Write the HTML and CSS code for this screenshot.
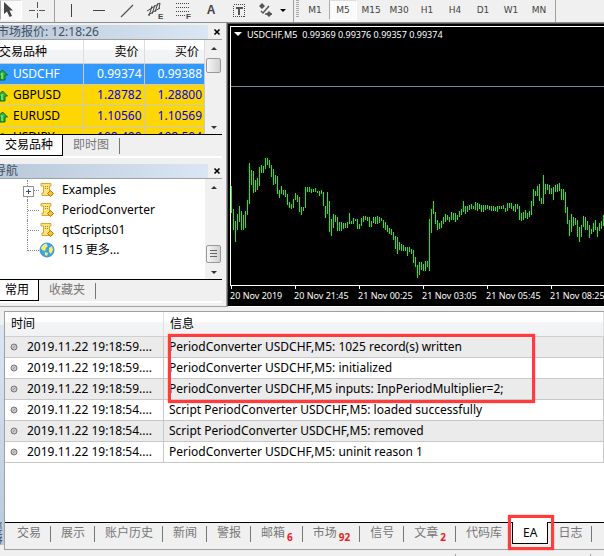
FILE: index.html
```html
<!DOCTYPE html>
<html lang="zh-CN">
<head>
    <meta charset="utf-8">
    <title>USDCHF,M5</title>
    <link rel="stylesheet" href="styles.css">
</head>
<body>

    <!-- Shared icons -->
    <svg class="defs" width="0" height="0">
        <defs>
            <symbol id="up" viewBox="0 0 12 12">
                <path d="M5.500 1 L10.500 6 H8 V11 H3 V6 H0.500 Z" fill="#2fb53a" stroke="#0b6b14"/>
                <path d="M5 4 V10" stroke="#b6f5a8"/>
            </symbol>
            <symbol id="script" viewBox="0 0 16 16">
                <path d="M2 1.500 H12 V4 H10.500 V11 H13 V13.500 H3 V11 H4.500 V4 H2 Z" fill="#ffe27a" stroke="#d3a73a"/>
                <path d="M6 4.500 H9 M6 6.500 H9" stroke="#a5822f" stroke-dasharray="1 1"/>
                <path d="M11.500 8.500 L14.500 11.500 L11.500 14.500 L8.500 11.500 Z" fill="#f2c230" stroke="#a97c0c"/>
            </symbol>
            <symbol id="dot" viewBox="0 0 8 8">
                <circle cx="4" cy="4" r="3" fill="#c8c8c8" stroke="#777"/>
                <path d="M2.500 5.500 L5.500 2.500" stroke="#999"/>
            </symbol>
            <symbol id="close" viewBox="0 0 8 8">
                <path d="M1.500 1.500 L6.500 6.500 M6.500 1.500 L1.500 6.500" stroke="#000" stroke-width="1.600"/>
            </symbol>
        </defs>
    </svg>

    <!-- Toolbar -->
    <div class="toolbar">
        <button class="tool tool-cursor pressed" aria-label="Cursor">
            <svg width="12" height="16"><path d="M1 0 V12 L4 9.500 L6.500 15 L9 14 L6.500 8.500 H10 Z" fill="#444"/></svg>
        </button>
        <button class="tool tool-cross" aria-label="Crosshair">
            <svg width="16" height="16" shape-rendering="crispEdges"><path d="M0 8.500 H6 M10 8.500 H16 M8.500 0 V6 M8.500 11 V16 M8 8.500 H9" stroke="#555"/></svg>
        </button>
        <span class="sep"></span>
        <button class="tool" aria-label="Vertical line">
            <svg width="16" height="16" shape-rendering="crispEdges"><path d="M8.500 2 V15" stroke="#444"/></svg>
        </button>
        <button class="tool" aria-label="Horizontal line">
            <svg width="16" height="16" shape-rendering="crispEdges"><path d="M2 8.500 H14" stroke="#444"/></svg>
        </button>
        <button class="tool" aria-label="Trendline">
            <svg width="16" height="16"><path d="M2 15 L14 3" stroke="#555" stroke-width="1.300"/></svg>
        </button>
        <button class="tool" aria-label="Channel">
            <svg width="18" height="18">
                <path d="M1 10 L14 2 M2 14 L14 7 M6 5 L3 15 M9 4 L6 13 M12 2 L9 11 M14 2 L13 8" fill="none" stroke="#444"/>
                <text x="12" y="18">E</text>
            </svg>
        </button>
        <button class="tool" aria-label="Fibonacci">
            <svg width="16" height="18">
                <path d="M1 2.500 H15 M1 6.500 H15 M1 10.500 H15 M1 14.500 H10" stroke="#444" stroke-dasharray="1 1" shape-rendering="crispEdges"/>
                <text x="11" y="18">F</text>
            </svg>
        </button>
        <button class="tool tool-text" aria-label="Text">A</button>
        <button class="tool" aria-label="Text label">
            <svg width="14" height="15" shape-rendering="crispEdges">
                <rect x="1.500" y="1.500" width="11" height="12" fill="none" stroke="#444" stroke-dasharray="1 1"/>
                <path d="M4 4 H11 V6 H8 V12 H6 V6 H4 Z" fill="#555"/>
            </svg>
        </button>
        <button class="tool tool-arrows" aria-label="Arrows">
            <svg width="28" height="16">
                <path d="M4 1 L7 4 L4 7 L1 4 Z M11 9 L14 12 L11 15 L8 12 Z" fill="#555"/>
                <path d="M3 9 L5 11 L11 4 M7 12 H14" fill="none" stroke="#555" stroke-width="1.500"/>
                <path d="M22 7 H28 L25 10 Z" fill="#000"/>
            </svg>
        </button>
        <span class="sep"></span>
        <span class="grip"></span>
        <button class="tool">M1</button>
        <button class="tool pressed">M5</button>
        <button class="tool">M15</button>
        <button class="tool">M30</button>
        <button class="tool">H1</button>
        <button class="tool">H4</button>
        <button class="tool">D1</button>
        <button class="tool">W1</button>
        <button class="tool">MN</button>
        <span class="sep"></span>
    </div>

    <div class="workspace">
        <div class="sidebar">

            <!-- Market watch -->
            <div class="panel">
                <div class="panel-title">
                    <span class="caption">市场报价: 12:18:26</span>
                    <button class="close" aria-label="关闭"><svg width="8" height="8"><use href="#close"/></svg></button>
                </div>
                <div class="panel-body market">
                    <div class="view">
                        <table class="quotes">
                            <thead>
                                <tr><th>交易品种</th><th>卖价</th><th>买价</th></tr>
                            </thead>
                            <tbody>
                                <tr class="selected"><td><svg width="12" height="12"><use href="#up"/></svg>USDCHF</td><td>0.99374</td><td>0.99388</td></tr>
                                <tr><td><svg width="12" height="12"><use href="#up"/></svg>GBPUSD</td><td>1.28782</td><td>1.28800</td></tr>
                                <tr><td><svg width="12" height="12"><use href="#up"/></svg>EURUSD</td><td>1.10560</td><td>1.10569</td></tr>
                                <tr><td><svg width="12" height="12"><use href="#up"/></svg>USDJPY</td><td>108.490</td><td>108.504</td></tr>
                            </tbody>
                        </table>
                    </div>
                    <div class="scrollbar">
                        <span class="arrow arrow-up"></span>
                        <span class="thumb"></span>
                        <span class="arrow arrow-down"></span>
                    </div>
                </div>
                <div class="tabs">
                    <button class="tab active">交易品种</button>
                    <button class="tab">即时图</button>
                </div>
            </div>

            <!-- Navigator -->
            <div class="panel">
                <div class="panel-title">
                    <span class="caption caption-nav">导航</span>
                    <button class="close" aria-label="关闭"><svg width="8" height="8"><use href="#close"/></svg></button>
                </div>
                <div class="panel-body navigator">
                    <ul class="tree">
                        <li class="expandable"><svg width="16" height="16"><use href="#script"/></svg>Examples</li>
                        <li><svg width="16" height="16"><use href="#script"/></svg>PeriodConverter</li>
                        <li><svg width="16" height="16"><use href="#script"/></svg>qtScripts01</li>
                        <li>
                            <svg width="16" height="16">
                                <circle cx="8" cy="8" r="7" fill="#3aa5ea" stroke="#4a90c8"/>
                                <path d="M3 4 L7 2 L9 4 L7 6 L6 9 L3 8 L2 6 Z M10 6 L13 4 L14 8 L12 12 L10 10 Z M6 10 L9 11 L8 14 L6 13 Z" fill="#ffe95c"/>
                                <path d="M3 5 Q5 2 8 2" fill="none" stroke="#d5f0ff"/>
                            </svg>115 更多...
                        </li>
                    </ul>
                    <div class="scrollbar low">
                        <span class="arrow arrow-up"></span>
                        <span class="thumb lined"></span>
                        <span class="arrow arrow-down"></span>
                    </div>
                </div>
                <div class="tabs">
                    <button class="tab active">常用</button>
                    <button class="tab">收藏夹</button>
                </div>
            </div>
        </div>

        <!-- Chart window -->
        <div class="chart">
            <div class="plot">
                <div class="chart-title">
                    <svg width="8" height="5"><path d="M0 0 H8 L4 4 Z" fill="#fff"/></svg>
                    <span>USDCHF,M5</span>
                    <span>0.99369 0.99376 0.99357 0.99374</span>
                </div>
                <svg class="bars" shape-rendering="crispEdges">
                    <line x1="0" y1="59.500" x2="100%" y2="59.500" stroke="#778899"/>
                    <path id="bars" stroke="#00ff00"/>
                </svg>
            </div>
            <div class="axis">
                <span>20 Nov 2019</span>
                <span>20 Nov 21:45</span>
                <span>21 Nov 00:25</span>
                <span>21 Nov 03:05</span>
                <span>21 Nov 05:45</span>
                <span>21 Nov 08:25</span>
            </div>
        </div>
    </div>

    <!-- Terminal -->
    <div class="terminal">
        <div class="terminal-side"><span>终端</span></div>
        <div class="terminal-main">
            <div class="log-area">
                <table class="log">
                    <thead>
                        <tr><th>时间</th><th>信息</th></tr>
                    </thead>
                    <tbody>
                        <tr><td><svg width="8" height="8"><use href="#dot"/></svg>2019.11.22 19:18:59....</td><td>PeriodConverter USDCHF,M5: 1025 record(s) written</td></tr>
                        <tr><td><svg width="8" height="8"><use href="#dot"/></svg>2019.11.22 19:18:59....</td><td>PeriodConverter USDCHF,M5: initialized</td></tr>
                        <tr><td><svg width="8" height="8"><use href="#dot"/></svg>2019.11.22 19:18:59....</td><td>PeriodConverter USDCHF,M5 inputs: InpPeriodMultiplier=2;</td></tr>
                        <tr><td><svg width="8" height="8"><use href="#dot"/></svg>2019.11.22 19:18:54....</td><td>Script PeriodConverter USDCHF,M5: loaded successfully</td></tr>
                        <tr><td><svg width="8" height="8"><use href="#dot"/></svg>2019.11.22 19:18:54....</td><td>Script PeriodConverter USDCHF,M5: removed</td></tr>
                        <tr><td><svg width="8" height="8"><use href="#dot"/></svg>2019.11.22 19:18:54....</td><td>PeriodConverter USDCHF,M5: uninit reason 1</td></tr>
                    </tbody>
                </table>
                <div class="mark mark-log"></div>
            </div>
            <div class="terminal-tabs">
                <button class="tab">交易</button>
                <button class="tab">展示</button>
                <button class="tab">账户历史</button>
                <button class="tab">新闻</button>
                <button class="tab">警报</button>
                <button class="tab">邮箱<b>6</b></button>
                <button class="tab">市场<b>92</b></button>
                <button class="tab">信号</button>
                <button class="tab">文章<b>2</b></button>
                <button class="tab before-active">代码库</button>
                <button class="tab active">EA<span class="mark mark-tab"></span></button>
                <button class="tab">日志</button>
            </div>
        </div>
    </div>

    <!-- Status bar -->
    <div class="status">
        <span></span>
        <span></span>
    </div>

    <script src="chart.js"></script>
</body>
</html>
```
FILE: styles.css
```css
/* General Styling */
* {
    box-sizing: border-box;
}

body {
    margin: 0;
    min-height: 100vh;
    display: flex;
    flex-direction: column;
    overflow: hidden;
    background-color: #f0f0f0;
    color: #000;
    font-family: "Noto Sans", "Noto Sans CJK SC", sans-serif;
    font-size: 12px;
    line-height: 20px;
}

button {
    margin: 0;
    padding: 0;
    border: none;
    background: none;
    color: inherit;
    font: inherit;
    flex: none;
}

svg {
    flex: none;
    overflow: visible;
}

table {
    width: 100%;
    border-collapse: separate;
    border-spacing: 0;
    table-layout: fixed;
}

th {
    font-weight: normal;
    text-align: left;
    background: linear-gradient(#fff 40%, #f3f4f6 45%, #f0f2f4);
}

td,
th {
    padding: 0;
    white-space: nowrap;
}

.defs {
    position: absolute;
}

/* Toolbar */
.toolbar {
    display: flex;
    height: 23px;
    border-bottom: 1px solid #8c8c8c;
}

.tool {
    width: 28px;
    height: 20px;
    display: flex;
    align-items: center;
    justify-content: center;
    color: #444;
    font-family: "DejaVu Sans", sans-serif;
    font-size: 9px;
}

.tool text {
    font-family: "Liberation Sans", sans-serif;
    font-size: 8px;
    font-weight: bold;
    fill: #444;
}

.tool-cursor {
    width: 22px;
    padding-right: 4px;
}

.tool-cross {
    width: 30px;
}

.tool-text {
    font-family: "Liberation Sans", sans-serif;
    font-size: 12px;
    font-weight: bold;
}

.tool-arrows {
    width: 38px;
}

.pressed {
    background-color: #fafafa;
    border: 1px solid #fff;
    border-left-color: #aaa;
    border-top-color: #ddd;
}

.sep {
    width: 1px;
    margin: 0 2px;
    background-color: #a0a0a0;
}

.grip {
    width: 3px;
    height: 18px;
    margin-right: 2px;
    background: repeating-linear-gradient(#aaa 0 1px, #f0f0f0 1px 2px);
}

/* Workspace */
.workspace {
    display: flex;
    height: 284px;
}

.sidebar {
    flex: none;
    width: 227px;
    padding: 2px 4px 0 0;
    display: flex;
    flex-direction: column;
    gap: 6px;
    border-right: 1px solid #a0a0a0;
    border-bottom: 1px solid #a0a0a0;
}

.panel {
    border-bottom: 2px solid #fff;
}

.panel-title {
    display: flex;
    justify-content: space-between;
    height: 15px;
    border-bottom: 1px solid #a0a0a0;
}

.caption {
    flex: 1;
    margin-right: 4px;
    text-indent: -3px;
    line-height: 14px;
    color: #43505e;
    background: linear-gradient(90deg, #b9c9da, #dae6f3);
}

.caption-nav {
    text-indent: -6px;
}

.close {
    width: 10px;
    line-height: 12px;
}

.panel-body {
    display: flex;
    background-color: #fff;
    border-bottom: 1px solid #000;
}

.market {
    height: 95px;
}

.navigator {
    height: 101px;
}

.view {
    flex: 1;
    overflow: hidden;
}

/* Quotes */
.quotes th {
    height: 24px;
    border-right: 1px solid #ddd;
    border-bottom: 1px solid #ccc;
}

.quotes th:first-child {
    width: 84px;
    text-indent: -1px;
}

.quotes th + th {
    padding-right: 5px;
    text-align: right;
}

.quotes td {
    height: 21px;
    background-color: #ffd700;
    border-right: 1px solid #c8c8c8;
    border-bottom: 1px solid #c8c8c8;
}

.quotes td + td {
    padding-right: 2px;
    text-align: right;
    color: #0000f0;
}

.quotes td svg {
    margin: 0 4px 0 -3px;
    vertical-align: -3px;
}

.quotes .selected td {
    background-color: #3399ff;
    color: #fff;
}

/* Scrollbar */
.scrollbar {
    flex: none;
    width: 17px;
    padding: 7px 1px 5px;
    display: flex;
    flex-direction: column;
    align-items: center;
    background-color: #f0f0f0;
}

.arrow {
    border: 3px solid transparent;
}

.arrow-up {
    border-top: none;
    border-bottom-color: #333;
}

.arrow-down {
    margin-top: auto;
    border-bottom: none;
    border-top-color: #333;
}

.thumb {
    width: 15px;
    height: 15px;
    margin-top: 8px;
    border: 1px solid #989898;
    border-radius: 2px;
    background: linear-gradient(90deg, #f6f6f6, #d2d2d2);
}

.low .thumb {
    height: 18px;
    margin-top: auto;
}

.low .arrow-down {
    margin-top: 8px;
}

.lined {
    padding: 4px 3px;
}

.lined::before {
    content: "";
    display: block;
    height: 8px;
    background: repeating-linear-gradient(#666 0 1px, transparent 1px 3px);
}

/* Tabs */
.tabs {
    display: flex;
    height: 21px;
}

.tab {
    position: relative;
    height: 20px;
    color: #777;
    white-space: nowrap;
}

.tabs .tab {
    padding: 0 10px;
}

.tabs .tab::after {
    content: "";
    display: inline-block;
    width: 1px;
    height: 16px;
    margin-left: 10px;
    background-color: #777;
    vertical-align: middle;
}

.tabs .active {
    height: 21px;
    padding: 0 9px 0 5px;
    background-color: #fff;
    border-right: 1px solid #000;
    border-bottom: 1px solid #000;
    color: #000;
}

.tabs .active::after {
    display: none;
}

/* Navigator tree */
.tree {
    flex: 1;
    margin: 0;
    padding: 1px 0 0 27px;
    list-style: none;
}

.tree li {
    position: relative;
    display: flex;
    align-items: center;
    gap: 7px;
    height: 20px;
    padding-left: 12px;
}

.tree li::before {
    content: "";
    position: absolute;
    left: 0;
    top: 0;
    width: 11px;
    height: 100%;
    border-left: 1px dotted #888;
    background: repeating-linear-gradient(90deg, #888 0 1px, transparent 1px 2px) 0 10px / 11px 1px no-repeat;
}

.tree li:last-child::before {
    height: 11px;
}

.expandable::after {
    content: "";
    position: absolute;
    left: -4px;
    top: 6px;
    width: 9px;
    height: 9px;
    border: 1px solid #919191;
    background:
        linear-gradient(#2a4fa0, #2a4fa0) center / 5px 1px no-repeat,
        linear-gradient(#2a4fa0, #2a4fa0) center / 1px 5px no-repeat,
        #fff;
}

/* Chart */
.chart {
    flex: 1;
    min-width: 0;
    padding: 2px 0 0 2px;
    border-left: 1px solid #555;
    border-top: 1px solid #555;
    border-bottom: 1px solid #fff;
    background-color: #000;
    color: #fff;
    font-size: 9px;
    overflow: hidden;
}

.plot {
    display: grid;
    border: 1px solid #fff;
    border-right: none;
}

.chart-title,
.bars {
    grid-area: 1 / 1;
}

.chart-title {
    display: flex;
    align-items: center;
    align-self: start;
    gap: 5px;
    height: 15px;
    padding-left: 3px;
    white-space: nowrap;
}

.bars {
    display: block;
    width: 100%;
    height: 258px;
}

.axis {
    display: flex;
}

.axis span {
    flex: none;
    width: 64px;
    line-height: 14px;
    white-space: nowrap;
}

.axis span::before {
    content: "";
    display: block;
    width: 1px;
    height: 3px;
    margin-left: 1px;
    background-color: #fff;
}

/* Terminal */
.terminal {
    flex: 1;
    display: flex;
    margin-top: 4px;
}

.terminal-side {
    flex: none;
    width: 4px;
    margin: 14px 0 5px;
    display: flex;
    align-items: flex-end;
    justify-content: flex-end;
    overflow: hidden;
    background: linear-gradient(#dae6f3, #b9c9da);
    color: #43505e;
}

.terminal-side span {
    writing-mode: vertical-rl;
    transform: rotate(180deg);
    line-height: 12px;
}

.terminal-main {
    flex: 1;
    min-width: 0;
    display: flex;
    flex-direction: column;
    border-left: 1px solid #a0a0a0;
    border-top: 1px solid #a0a0a0;
}

.log-area {
    position: relative;
    flex: 1;
    background-color: #fff;
    border-bottom: 1px solid #000;
}

.log th {
    height: 25px;
    padding-left: 6px;
    border-right: 1px solid #e0e0e0;
    border-bottom: 1px solid #d0d0d0;
}

.log th:first-child {
    width: 159px;
}

.log td {
    height: 21px;
    padding-left: 5px;
    border-right: 1px solid #c8c8c8;
    border-bottom: 1px solid #c8c8c8;
}

.log tbody tr:nth-child(odd) {
    background-color: #ebebeb;
}

.log td svg {
    margin-right: 9px;
}

/* Highlight frames */
.mark {
    position: absolute;
    border: 3px solid #ff3b3b;
    box-shadow: 0 0 1px #ff3b3b;
}

.mark-log {
    left: 163px;
    top: 22px;
    width: 367px;
    height: 69px;
}

.mark-tab {
    inset: -7px -7px -7px -5px;
}

.terminal-tabs {
    display: flex;
    height: 27px;
    padding-left: 2px;
    border-bottom: 1px solid #a0a0a0;
}

.terminal-tabs .tab {
    display: flex;
    padding-left: 10px;
}

.terminal-tabs .tab::after {
    content: "";
    width: 1px;
    height: 16px;
    margin: 3px 0 0 9px;
    background-color: #777;
}

.terminal-tabs b {
    margin: 6px 0 0 2px;
    color: #ed1c24;
    font-size: 10px;
    line-height: 16px;
}

.terminal-tabs .before-active::after {
    background: none;
}

.terminal-tabs .active {
    height: 22px;
    margin-top: -1px;
    padding: 1px 10px 0;
    background-color: #fff;
    border: 1px solid #000;
    border-top: none;
    color: #000;
}

.terminal-tabs .active::after {
    display: none;
}

/* Status bar */
.status {
    display: flex;
    height: 6px;
    padding: 4px 0 0;
    justify-content: flex-end;
}

.status span {
    width: 135px;
    border-left: 1px solid #a0a0a0;
}

.status span:last-child {
    width: 14px;
}
```
FILE: chart.js
```js
// high / low of each bar, measured down from the top of the price range
const bars = `46-73 69-90 81-102 74-90 66-82 71-90 75-90 71-88 60-75 23-64 30-45 31-53
40-52 38-50 27-46 25-33 26-33 18-29 18-25 20-28 25-37 29-45 35-44 36-54 50-58 46-54
50-55 50-57 54-65 62-68 64-69 59-68 53-60 55-62 57-72 67-75 67-71 47-68 47-52 47-52
49-53 49-52 48-52 51-53 51-56 50-54 52-66 66-78 52-74 61-92 79-96 74-88 75-82 77-91
82-91 82-91 83-89 83-88 82-88 73-84 81-84 78-84 79-81 79-89 84-89 78-86 76-82 76-80
77-81 77-87 81-87 77-83 77-84 76-84 77-83 78-81 80-88 82-90 85-92 88-94 89-95 92-100
96-109 97-114 102-110 104-111 105-111 107-111 107-116 107-112 109-114 110-123 117-127
125-138 122-135 122-130 124-131 121-131 121-127 79-131 69-93 61-74 72-84 80-90 83-89
81-88 77-84 74-82 75-80 77-82 72-80 73-80 73-82 75-80 71-77 69-75 61-72 66-74 66-72
65-70 64-69 66-69 62-70 63-71 64-69 65-72 65-72 65-70 65-69 66-70 66-71 66-71 67-71
66-72 66-69 66-69 65-69 68-72 63-71 63-68 63-69 66-71 64-72 64-69 66-80 73-81 72-80
70-78 73-79 71-77 61-75 49-66 51-56 46-56 44-61 58-64 35-64 44-54 44-50 45-54 48-54
47-60 45-52 44-52 43-51 49-60 49-60 52-73 67-84 80-96 74-92 77-86 78-85 80-97 87-102
85-97 76-87 77-90 81-90 85-98 89-94 83-92 80-90 87-97 83-91 81-89 75-86`.split(/\s+/);

const top0 = 113;
const step = 2;

document.getElementById("bars").setAttribute("d", bars.map((bar, i) => {
    const [high, low] = bar.split("-").map(Number);
    return `M${i * step + 0.5} ${top0 + high}V${top0 + low}`;
}).join(""));
```
